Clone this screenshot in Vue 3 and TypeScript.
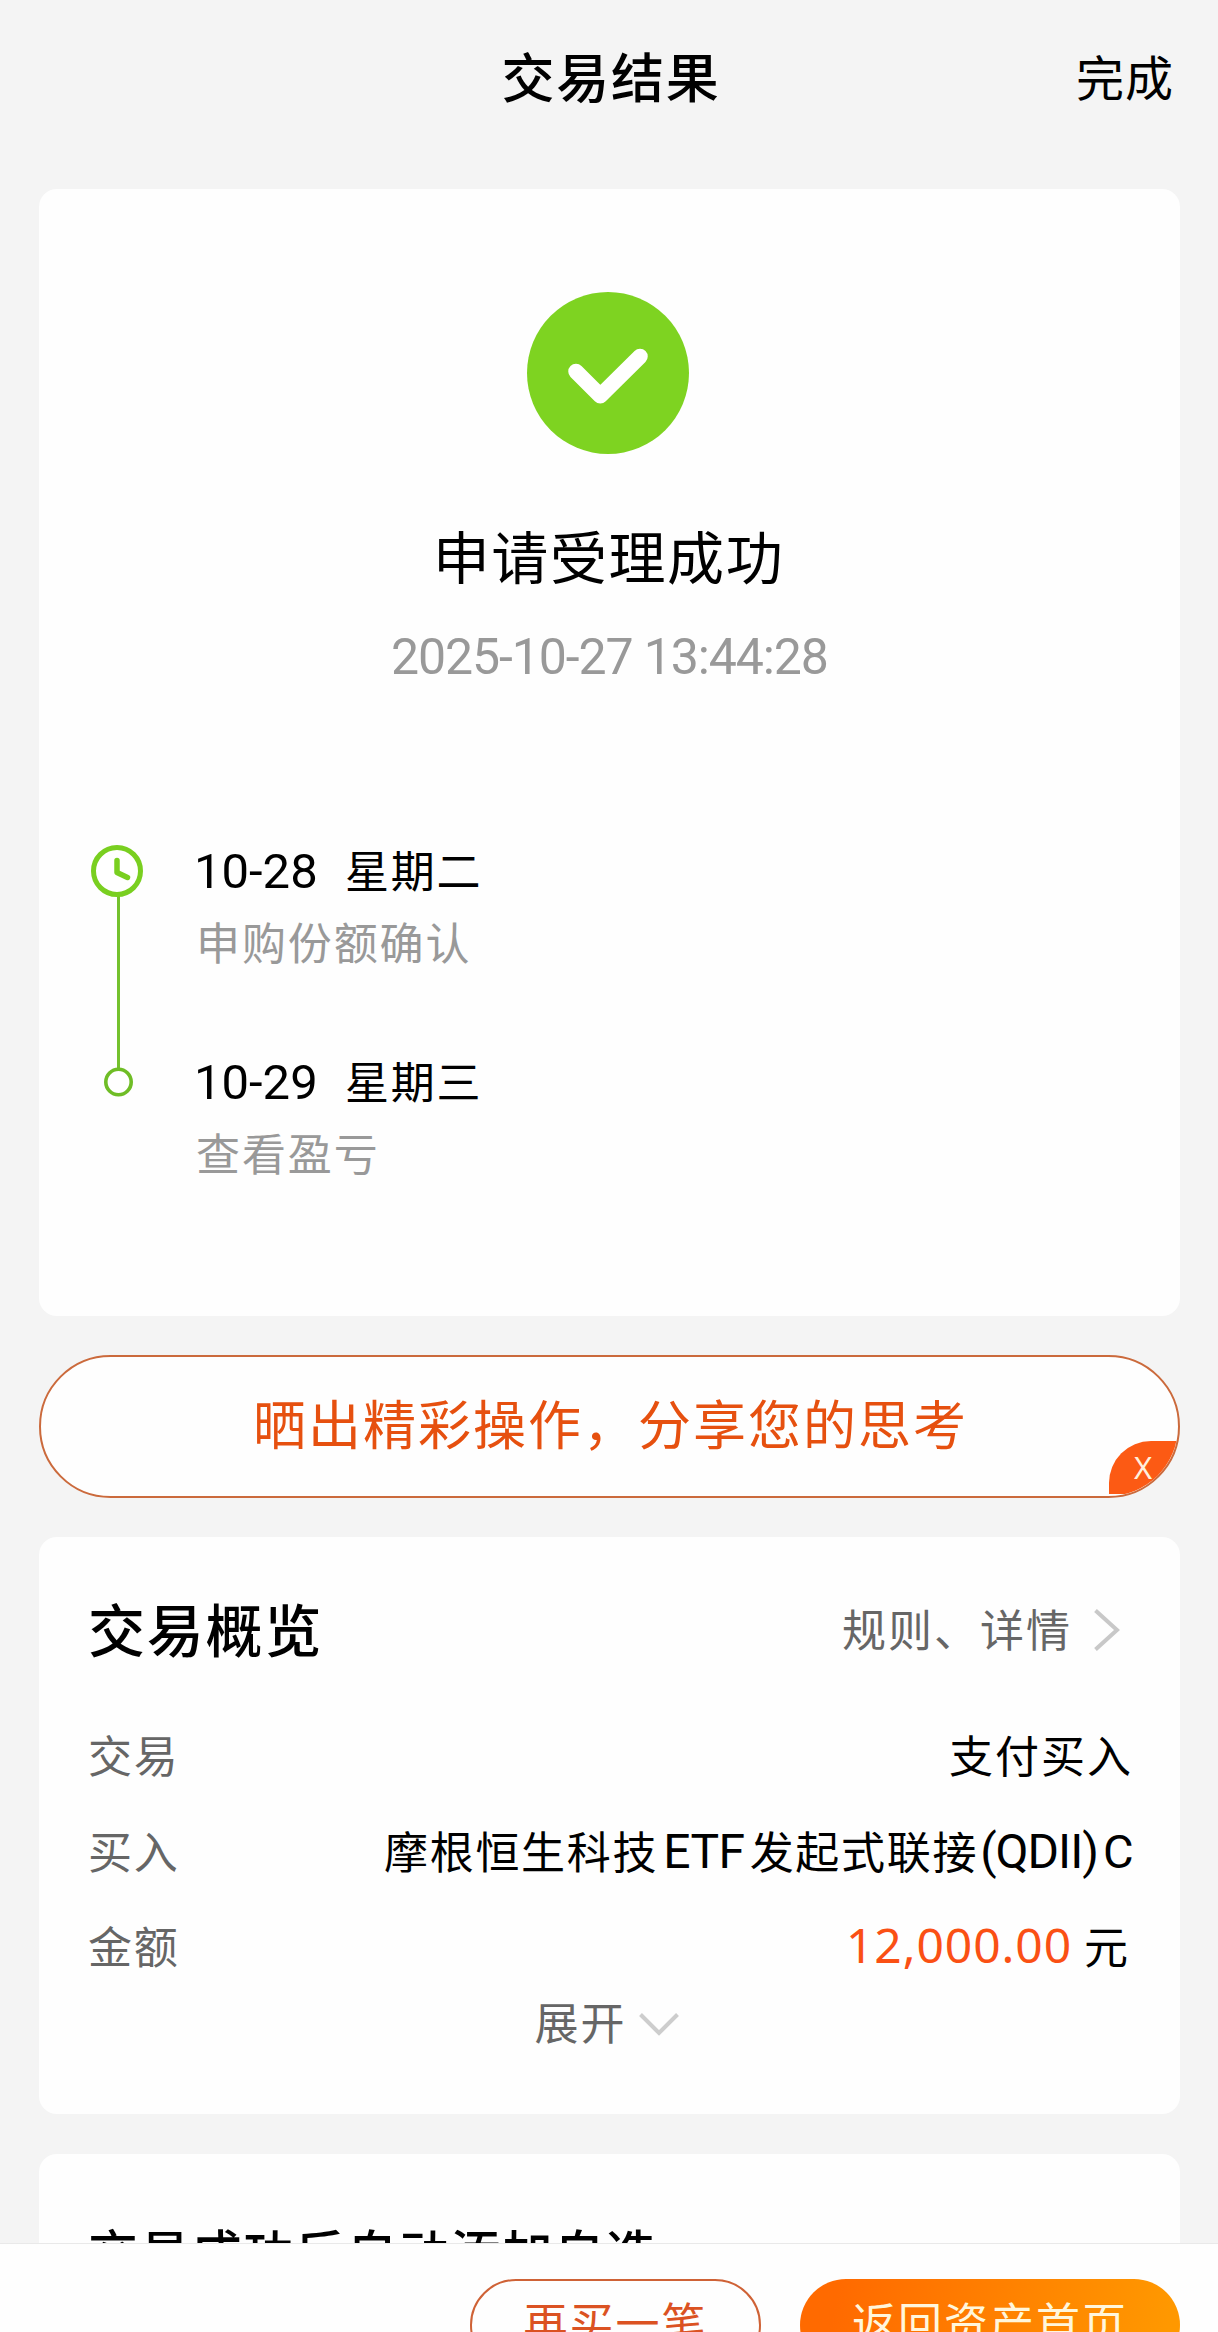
<script setup lang="ts">
interface Step {
  date: string
  weekday: string
  note: string
}

const steps: Step[] = [
  { date: '10-28', weekday: '星期二', note: '申购份额确认' },
  { date: '10-29', weekday: '星期三', note: '查看盈亏' },
]
</script>

<template>
  <div class="page">
    <main class="content">
      <header class="topbar">
        <span class="side"></span>
        <h1 class="topbar-title">交易结果</h1>
        <a class="side done">完成</a>
      </header>

      <section class="card result">
        <svg class="success" viewBox="0 0 162 162">
          <circle cx="81" cy="81" r="81" fill="#7ed321" />
          <path d="M49 79.500L73.300 103.700L113 64.500" fill="none" stroke="#fff" stroke-width="15.500" stroke-linecap="round" stroke-linejoin="round" />
        </svg>
        <h2 class="result-title">申请受理成功</h2>
        <p class="result-time">2025-10-27 13:44:28</p>

        <div class="timeline">
          <svg class="rail" viewBox="0 0 52 252">
            <path d="M27.500 51V223" stroke="#74c12d" stroke-width="3" />
            <circle cx="26" cy="26" r="23.500" fill="#fff" stroke="#79cf20" stroke-width="5" />
            <path d="M26 15.500V27.500L36.500 32.500" fill="none" stroke="#79cf20" stroke-width="5.500" stroke-linecap="round" stroke-linejoin="round" />
            <circle cx="27.500" cy="237" r="12.700" fill="#fff" stroke="#6fbd26" stroke-width="3.600" />
          </svg>
          <ul class="steps">
            <li v-for="step in steps" :key="step.date" class="step">
              <div class="step-head">
                <span class="step-date">{{ step.date }}</span>
                <span class="step-day">{{ step.weekday }}</span>
              </div>
              <div class="step-note">{{ step.note }}</div>
            </li>
          </ul>
        </div>
      </section>

      <section class="share">
        <span class="share-text">晒出精彩操作，分享您的思考</span>
        <span class="share-clip"><span class="share-close">X</span></span>
      </section>

      <section class="card overview">
        <div class="overview-head">
          <h2 class="overview-title">交易概览</h2>
          <a class="rules">
            <span>规则、详情</span>
            <svg class="chev-right" viewBox="0 0 26 42">
              <path d="M1.500 1.500L23 21L1.500 40.500" fill="none" stroke="#c8c8c8" stroke-width="4" />
            </svg>
          </a>
        </div>
        <div class="row">
          <span class="label">交易</span>
          <span class="value pay">支付买入</span>
        </div>
        <div class="row">
          <span class="label">买入</span>
          <span class="value fund">摩根恒生科技<span class="latin etf">ETF</span>发起式联接<span class="latin qdii">(QDII)</span><span class="latin klass">C</span></span>
        </div>
        <div class="row last">
          <span class="label">金额</span>
          <span class="value money"><span class="amount">12,000.00</span><span class="unit">元</span></span>
        </div>
        <div class="expand">
          <span>展开</span>
          <svg class="chev-down" viewBox="0 0 40 24">
            <path d="M1.500 1.500L20 20L38.500 1.500" fill="none" stroke="#cdcdcd" stroke-width="4" />
          </svg>
        </div>
      </section>

      <section class="card watch">
        <h2 class="watch-title">交易成功后自动添加自选</h2>
      </section>
    </main>

    <footer class="actions">
      <button class="btn again">再买一笔</button>
      <button class="btn home">返回资产首页</button>
    </footer>
  </div>
</template>

<style>
body {
  margin: 0;
  background: #f4f4f4;
}
</style>

<style scoped>
.page {
  display: flex;
  flex-direction: column;
  width: 1218px;
  height: 2332px;
  overflow: hidden;
  background: #f4f4f4;
  color: #000;
  font-family: "Noto Sans CJK SC", sans-serif;
  font-size: 44px;
}
h1, h2, p, ul {
  margin: 0;
  padding: 0;
  font-weight: 400;
  list-style: none;
}
svg {
  display: block;
  flex: none;
}
.content {
  height: 2243px;
  padding: 0 38px 0 39px;
  box-sizing: border-box;
  overflow: hidden;
}
.topbar {
  display: flex;
  align-items: center;
  justify-content: space-between;
  height: 149px;
  margin-bottom: 40px;
}
.topbar-title {
  padding-left: 3px;
  font-size: 53px;
  font-weight: 500;
  letter-spacing: 1.7px;
  white-space: nowrap;
}
.side {
  width: 200px;
  font-size: 48px;
  letter-spacing: 1px;
}
.done {
  text-align: right;
  margin-right: 6px;
  margin-left: -6px;
}
.card {
  background: #fefefe;
  border-radius: 18px;
  box-sizing: border-box;
}
.result {
  height: 1127px;
  padding-top: 103px;
}
.success {
  width: 162px;
  height: 162px;
  margin-left: 488px;
}
.result-title {
  margin-top: 60px;
  padding-right: 2px;
  text-align: center;
  font-size: 57px;
  line-height: 80px;
  letter-spacing: 1.6px;
}
.result-time {
  margin-top: 33px;
  text-align: center;
  font-family: Roboto, sans-serif;
  font-size: 50px;
  line-height: 60px;
  letter-spacing: -1.1px;
  color: #999;
}
.timeline {
  display: flex;
  margin-top: 151px;
  padding-left: 52px;
}
.rail {
  width: 52px;
  height: 252px;
  margin-top: 7px;
}
.steps {
  display: flex;
  flex-direction: column;
  gap: 79px;
  margin-left: 53px;
  padding-top: 1px;
}
.step-head {
  display: flex;
  align-items: center;
  height: 60px;
}
.step-date {
  width: 151px;
  margin-left: -2px;
  font-family: Roboto, sans-serif;
  font-size: 49px;
  line-height: 60px;
  padding-top: 6px;
}
.step-day {
  line-height: 60px;
  font-size: 44px;
  letter-spacing: 1.8px;
}
.step-note {
  margin-top: 12px;
  line-height: 60px;
  font-size: 44px;
  letter-spacing: 1.9px;
  color: #999;
}
.share {
  position: relative;
  display: flex;
  align-items: center;
  justify-content: center;
  height: 143px;
  margin: 39px 0;
  box-sizing: border-box;
  border: 2px solid #cb6a3c;
  border-radius: 72px;
  background: #fefefe;
}
.share-text {
  padding: 0 0 10px 2px;
  font-size: 53px;
  line-height: 80px;
  letter-spacing: 2px;
  color: #e6500f;
}
.share-clip {
  position: absolute;
  inset: 0;
  border-radius: 70px;
  overflow: hidden;
}
.share-close {
  position: absolute;
  right: 0;
  bottom: 2px;
  width: 69px;
  height: 53px;
  padding-left: 25px;
  box-sizing: border-box;
  border-radius: 42px 0 0 0;
  background: #fc5a14;
  color: #fff0dc;
  font-family: "Noto Sans", sans-serif;
  font-size: 31px;
  line-height: 53px;
}
.overview {
  height: 577px;
  padding: 50px 50px 0 49px;
}
.overview-head {
  display: flex;
  align-items: center;
  justify-content: space-between;
  height: 80px;
  margin-bottom: 39px;
}
.overview-title {
  margin-top: -1px;
  font-size: 57px;
  font-weight: 500;
  letter-spacing: 1.8px;
}
.rules {
  display: flex;
  align-items: center;
  margin-top: 2px;
  color: #666;
  letter-spacing: 2px;
}
.chev-right {
  width: 26px;
  height: 42px;
  margin: 4px 10px 0 22px;
}
.row {
  display: flex;
  align-items: center;
  justify-content: space-between;
  height: 96px;
}
.label {
  color: #666;
  letter-spacing: 1.7px;
}
.value {
  display: flex;
  align-items: center;
  letter-spacing: 2px;
}
.pay {
  margin-right: -3px;
}
.fund {
  letter-spacing: 1.7px;
}
.last {
  height: 93px;
}
.latin {
  font-family: Roboto, sans-serif;
  font-size: 48px;
  line-height: 60px;
  letter-spacing: -0.5px;
  padding-top: 4px;
}
.etf {
  margin: 0 5px 0 5px;
}
.qdii {
  margin-left: 2px;
  letter-spacing: -1px;
}
.klass {
  margin: 0 -3px 0 5px;
  font-size: 47px;
}
.amount {
  font-family: "Noto Sans", sans-serif;
  font-size: 48px;
  line-height: 60px;
  letter-spacing: 0.9px;
  color: #fa5014;
}
.unit {
  margin-left: 12px;
}
.expand {
  display: flex;
  align-items: center;
  justify-content: center;
  height: 60px;
  color: #666;
  letter-spacing: 2px;
}
.chev-down {
  width: 40px;
  height: 24px;
  margin: 8px 5px 0 12px;
}
.watch {
  height: 300px;
  margin-top: 40px;
  padding: 56px 49px 0;
}
.watch-title {
  font-size: 50px;
  font-weight: 500;
  line-height: 80px;
  letter-spacing: 1.8px;
}
.actions {
  display: flex;
  justify-content: flex-end;
  gap: 39px;
  height: 89px;
  padding: 35px 38px 0 0;
  box-sizing: border-box;
  overflow: hidden;
  border-top: 1px solid #e9e9e9;
  background: #fefefe;
}
.btn {
  flex: none;
  height: 92px;
  padding: 0 0 8px;
  border: 0;
  border-radius: 46px;
  font-family: inherit;
  font-size: 44px;
  letter-spacing: 2px;
}
.again {
  width: 291px;
  border: 2px solid #cf6236;
  background: #fefefe;
  color: #db5222;
}
.home {
  width: 380px;
  background: linear-gradient(100deg, #ff6a00 10%, #ff9800 95%);
  color: #fff6dc;
}
</style>
